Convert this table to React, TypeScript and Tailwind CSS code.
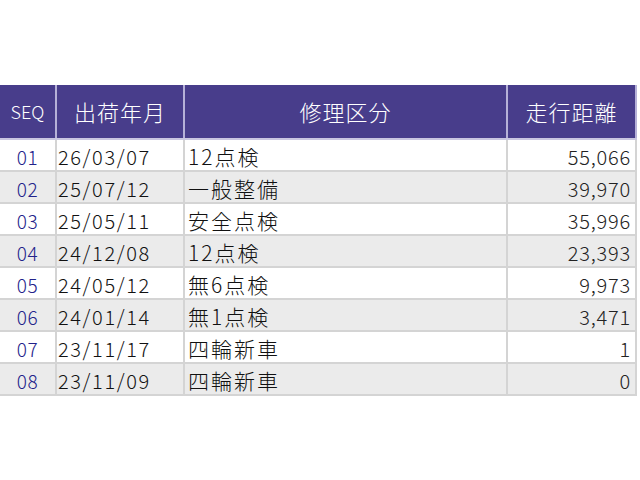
import React from 'react';

const rows = [
  { seq: '01', date: '26/03/07', kind: '12点検', km: '55,066' },
  { seq: '02', date: '25/07/12', kind: '一般整備', km: '39,970' },
  { seq: '03', date: '25/05/11', kind: '安全点検', km: '35,996' },
  { seq: '04', date: '24/12/08', kind: '12点検', km: '23,393' },
  { seq: '05', date: '24/05/12', kind: '無6点検', km: '9,973' },
  { seq: '06', date: '24/01/14', kind: '無1点検', km: '3,471' },
  { seq: '07', date: '23/11/17', kind: '四輪新車', km: '1' },
  { seq: '08', date: '23/11/09', kind: '四輪新車', km: '0' },
];

const App: React.FC = () => {
  return (
    <div className="w-[640px] h-[480px] bg-white pt-[85px] font-['Noto_Sans_CJK_JP',sans-serif] font-light">
      <div className="w-[637px]">
        {/* header */}
        <div className="grid grid-cols-[57px_128px_323px_129px] h-[55px] bg-[#483d8b] text-white border-b-2 border-[#c9c6e0]">
          <div className="flex items-center justify-center text-[18px] border-r-2 border-[#b6b1d8]">SEQ</div>
          <div className="flex items-center justify-center text-[22px] tracking-[1px] border-r-2 border-[#b6b1d8]">出荷年月</div>
          <div className="flex items-center justify-center text-[22px] tracking-[1px] border-r-2 border-[#b6b1d8]">修理区分</div>
          <div className="flex items-center justify-center text-[22px] tracking-[1px] border-r-2 border-[#b6b1d8]">走行距離</div>
        </div>

        {/* rows */}
        {rows.map((r, i) => (
          <div
            key={r.seq}
            className={`grid grid-cols-[57px_128px_323px_129px] h-[32px] leading-none border-b-2 border-[#d4d4d4] ${
              i % 2 === 1 ? 'bg-[#ebebeb]' : 'bg-white'
            }`}
          >
            <div className="flex items-center justify-center text-[19px] tracking-[0.5px] text-[#22228a] border-r-2 border-[#d4d4d4] pt-[3px]">{r.seq}</div>
            <div className="flex items-center pl-[1px] text-[20px] text-[#111] tracking-[1.6px] border-r-2 border-[#d4d4d4] pt-[3px]">{r.date}</div>
            <div className="flex items-center pl-[3px] text-[21px] text-[#111] tracking-[2px] border-r-2 border-[#d4d4d4] pt-[3px]">{r.kind}</div>
            <div className="flex items-center justify-end pr-[4px] text-[20px] text-[#222] tracking-[0.8px] border-r-2 border-[#d4d4d4] pt-[3px]">{r.km}</div>
          </div>
        ))}
      </div>
    </div>
  );
};

export default App;
